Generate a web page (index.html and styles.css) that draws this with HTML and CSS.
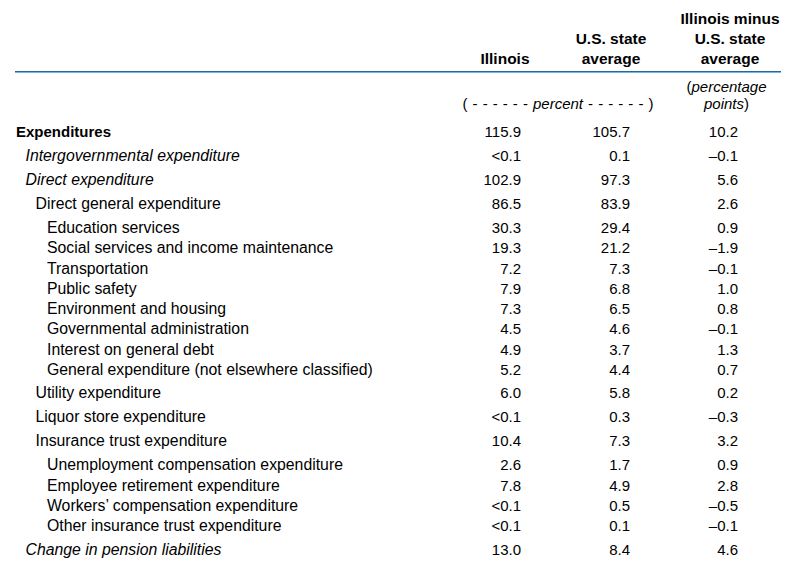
FILE: index.html
```html
<!DOCTYPE html>
<html lang="en">
<head>
<meta charset="utf-8">
<title>Illinois expenditures</title>
<link rel="stylesheet" href="styles.css">
</head>
<body>
<div class="table">
  <div class="head grid">
    <div></div>
    <div class="hc c1">Illinois</div>
    <div class="hc c2">U.S. state<br>average</div>
    <div class="hc c3">Illinois minus<br>U.S. state<br>average</div>
  </div>
  <div class="rule"></div>
  <div class="units grid">
    <div></div>
    <div class="span2"><span class="paren">(</span> - - - - - - <i>percent</i> - - - - - - <span class="paren">)</span></div>
    <div class="u3">(<i>percentage<br>points</i>)</div>
  </div>

  <div class="row grid l0 bold"><div class="lab">Expenditures</div><div class="n1">115.9</div><div class="n2">105.7</div><div class="n3">10.2</div></div>
  <div class="row grid l1 ital"><div class="lab">Intergovernmental expenditure</div><div class="n1">&lt;0.1</div><div class="n2">0.1</div><div class="n3">&ndash;0.1</div></div>
  <div class="row grid l1 ital"><div class="lab">Direct expenditure</div><div class="n1">102.9</div><div class="n2">97.3</div><div class="n3">5.6</div></div>
  <div class="row grid l2"><div class="lab">Direct general expenditure</div><div class="n1">86.5</div><div class="n2">83.9</div><div class="n3">2.6</div></div>
  <div class="sub">
    <div class="srow grid l3"><div class="lab">Education services</div><div class="n1">30.3</div><div class="n2">29.4</div><div class="n3">0.9</div></div>
    <div class="srow grid l3"><div class="lab">Social services and income maintenance</div><div class="n1">19.3</div><div class="n2">21.2</div><div class="n3">&ndash;1.9</div></div>
    <div class="srow grid l3"><div class="lab">Transportation</div><div class="n1">7.2</div><div class="n2">7.3</div><div class="n3">&ndash;0.1</div></div>
    <div class="srow grid l3"><div class="lab">Public safety</div><div class="n1">7.9</div><div class="n2">6.8</div><div class="n3">1.0</div></div>
    <div class="srow grid l3"><div class="lab">Environment and housing</div><div class="n1">7.3</div><div class="n2">6.5</div><div class="n3">0.8</div></div>
    <div class="srow grid l3"><div class="lab">Governmental administration</div><div class="n1">4.5</div><div class="n2">4.6</div><div class="n3">&ndash;0.1</div></div>
    <div class="srow grid l3"><div class="lab">Interest on general debt</div><div class="n1">4.9</div><div class="n2">3.7</div><div class="n3">1.3</div></div>
    <div class="srow grid l3"><div class="lab">General expenditure (not elsewhere classified)</div><div class="n1">5.2</div><div class="n2">4.4</div><div class="n3">0.7</div></div>
  </div>
  <div class="row grid l2"><div class="lab">Utility expenditure</div><div class="n1">6.0</div><div class="n2">5.8</div><div class="n3">0.2</div></div>
  <div class="row grid l2"><div class="lab">Liquor store expenditure</div><div class="n1">&lt;0.1</div><div class="n2">0.3</div><div class="n3">&ndash;0.3</div></div>
  <div class="row grid l2"><div class="lab">Insurance trust expenditure</div><div class="n1">10.4</div><div class="n2">7.3</div><div class="n3">3.2</div></div>
  <div class="sub">
    <div class="srow grid l3"><div class="lab">Unemployment compensation expenditure</div><div class="n1">2.6</div><div class="n2">1.7</div><div class="n3">0.9</div></div>
    <div class="srow grid l3"><div class="lab">Employee retirement expenditure</div><div class="n1">7.8</div><div class="n2">4.9</div><div class="n3">2.8</div></div>
    <div class="srow grid l3"><div class="lab">Workers&rsquo; compensation expenditure</div><div class="n1">&lt;0.1</div><div class="n2">0.5</div><div class="n3">&ndash;0.5</div></div>
    <div class="srow grid l3"><div class="lab">Other insurance trust expenditure</div><div class="n1">&lt;0.1</div><div class="n2">0.1</div><div class="n3">&ndash;0.1</div></div>
  </div>
  <div class="row grid l1 ital"><div class="lab">Change in pension liabilities</div><div class="n1">13.0</div><div class="n2">8.4</div><div class="n3">4.6</div></div>
</div>
</body>
</html>
```
FILE: styles.css
```css
html, body {
  margin: 0;
  padding: 0;
  background: #ffffff;
}
body {
  font-family: "Liberation Sans", Arial, Helvetica, sans-serif;
  color: #000;
}
.table {
  margin-left: 15px;
  width: 766px;
}
.grid {
  display: grid;
  grid-template-columns: 440px 100px 112px 114px;
}
.head {
  padding-top: 9px;
  padding-bottom: 2px;
  align-items: end;
  font-weight: bold;
  font-size: 15.5px;
  line-height: 20px;
}
.hc {
  text-align: center;
}
.head .c3 {
  padding-left: 12px;
}
.rule {
  height: 1px;
  background: #1c6aa6;
  border-bottom: 1px solid #7fb0d6;
}
.units {
  padding-top: 5px;
  padding-bottom: 8px;
  font-size: 15px;
  line-height: 17px;
  align-items: end;
}
.span2 {
  grid-column: 2 / 4;
  text-align: center;
  white-space: pre;
  word-spacing: 0.9px;
  padding-right: 6px;
}
.u3 {
  text-align: center;
  padding-left: 5px;
}
.row {
  height: 24px;
  line-height: 24px;
}
.sub {
  padding-top: 2px;
  padding-bottom: 1px;
}
.srow {
  height: 20.3px;
  line-height: 20.3px;
}
.lab {
  font-size: 15.8px;
  white-space: nowrap;
}
.bold .lab {
  font-weight: bold;
  font-size: 15px;
}
.ital .lab {
  font-style: italic;
}
.n1, .n2, .n3 {
  font-size: 15px;
  text-align: right;
}
.n1 { padding-right: 34px; }
.n2 { padding-right: 37px; }
.n3 { padding-right: 43px; }
.l0 .lab { padding-left: 1px; }
.l1 .lab { padding-left: 10.5px; }
.l2 .lab { padding-left: 20.5px; }
.l3 .lab { padding-left: 32px; }
```
